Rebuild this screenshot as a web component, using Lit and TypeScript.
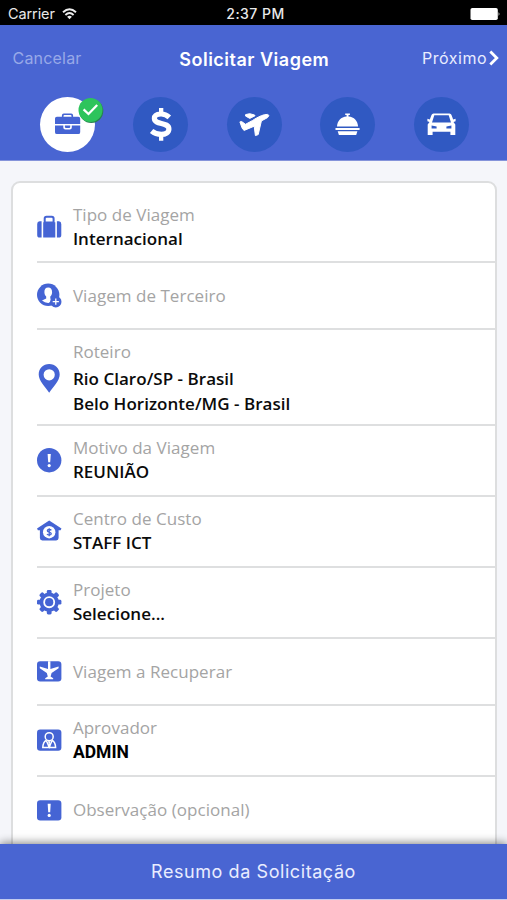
import { LitElement, html, svg, css, nothing } from "lit";
import { customElement, property } from "lit/decorators.js";

const BLUE = "#4564d4";

const rowIcons: Record<string, unknown> = {
  luggage: svg`<path d="M6.2 7.2V22.6H18.3V7.2H17.6V3.6Q17.6 .8 14.8 .8H9.5Q6.7 .8 6.7 3.6V7.2ZM8.7 6.4V3.8Q8.7 2.7 9.8 2.7H14.5Q15.6 2.7 15.6 3.8V6.4Z" fill-rule="evenodd"/><path d="M4.6 6.2V22.6H2.6Q.2 22.6 .2 20V9Q.2 6.4 2.6 6.2ZM19.9 6.2H21.9Q24.3 6.4 24.3 9V20Q24.3 22.6 21.9 22.6H19.9Z"/>`,
  guest: svg`<circle cx="11.2" cy="11.8" r="11.2"/><path d="M11.2 4.6C8.5 4.6 7.3 6.6 7.4 9.2 7.5 11.4 8.3 12.6 9.2 13.6V15.6L5 17.6Q8 20.2 11.6 20L15.2 17.3 13.3 15.6V13.6C14.4 12.4 15.1 11.2 15.1 9.2 15.1 6.6 13.9 4.6 11.2 4.6Z" fill="#fff"/><circle cx="18.8" cy="18.7" r="5.7"/><path d="M18.8 15.6V21.8M15.7 18.7H21.9" stroke="#fff" stroke-width="1.3"/>`,
  pin: svg`<path fill-rule="evenodd" d="M12.2-2C6.2-2 1.7 2.4 1.7 8.4 1.7 14.8 8.2 20.6 12.2 26.8 16.2 20.6 22.7 14.8 22.7 8.4 22.7 2.4 18.2-2 12.2-2ZM12.2 3.2A5.6 5.6 0 1 1 12.2 14.4 5.6 5.6 0 1 1 12.2 3.2Z"/>`,
  alert: svg`<circle cx="12.2" cy="12.2" r="12.2"/><path d="M10.6 5.9H13.8L13.2 14.2H11.2Z" fill="#fff"/><circle cx="12.2" cy="17.6" r="1.6" fill="#fff"/>`,
  house: svg`<path d="M12.2 1.6 24.5 9.6 23.6 11.2H21.6V19Q21.6 21.4 19.2 21.4H5.3Q2.9 21.4 2.9 19V11.2H.9L0 9.6Z"/><circle cx="12.2" cy="13.2" r="6.2" fill="#fff"/><path d="M14.3 11.4C13.6 10.2 10.4 10.1 10.3 11.8 10.3 13.6 14.3 12.8 14.3 14.8 14.2 16.4 10.8 16.3 10 15M12.2 9.3V17.2" fill="none" stroke="${BLUE}" stroke-width="1.3"/>`,
  gear: svg`<circle cx="12.2" cy="12.2" r="7.4" fill="none" stroke="${BLUE}" stroke-width="4.4"/>${[0, 45, 90, 135, 180, 225, 270, 315].map(
    (a) => svg`<path transform="rotate(${a} 12.2 12.2)" d="M9.8 4V1.4Q9.8 0 11.2 0H13.2Q14.6 0 14.6 1.4V4Z"/>`
  )}<circle cx="12.2" cy="12.2" r="5" fill="none" stroke="#fff" stroke-width="1.9"/><circle cx="12.2" cy="12.2" r="4.1"/>`,
  recover: svg`<rect x="0" y="2.2" width="24.4" height="20.2" rx="3.2"/><path d="M11 2.2H13.4V10L21.6 7.4V9.2L14.6 14 13.6 17.6 16.2 19.3V20.3H8.2V19.3L10.8 17.6 9.8 14 2.8 9.2V7.4L11 10Z" fill="#fff"/>`,
  approver: svg`<rect x="0" y="1.6" width="24.4" height="21.2" rx="3.2"/><g fill="none" stroke="#fff" stroke-width="1.5"><circle cx="12.2" cy="8.7" r="4"/><path d="M9.5 12.2C7 13.6 5.9 16 5.8 19.6H18.6C18.5 16 17.4 13.6 14.9 12.2M9.4 12.8 12.2 19.2 15 12.8"/></g><path d="M10.9 13.2H13.5L12.8 15.2 13.4 18.8H11L11.6 15.2Z" fill="#fff"/>`,
  note: svg`<rect x="0" y="2.2" width="24.4" height="20.2" rx="3.2"/><path d="M10.7 5.8H13.7L13.2 14.2H11.2Z" fill="#fff"/><circle cx="12.2" cy="17.4" r="1.6" fill="#fff"/>`,
};

const stepIcons: Record<string, unknown> = {
  briefcase: svg`<g fill="${BLUE}"><path fill-rule="evenodd" d="M16.5 19.7H21.9V18.4Q21.9 16.5 23.8 16.5H31.2Q33.1 16.5 33.1 18.4V19.7H38.3Q40.2 19.7 40.2 21.6V27H15V21.6Q15 19.7 16.9 19.7ZM23.5 19.7H31.5V19Q31.5 18 30.5 18H24.5Q23.5 18 23.5 19Z"/><path d="M15 28.4H23.3V30.6Q23.3 32.6 25.3 32.6H29.8Q31.8 32.6 31.8 30.6V28.4H40.2V35.2Q40.2 37.1 38.3 37.1H16.9Q15 37.1 15 35.2Z"/><path d="M24.9 28.4H30.2V29.9Q30.2 31 29.1 31H26Q24.9 31 24.9 29.9Z"/></g>`,
  dollar: svg`<path d="M36.3 20.3C33.8 18 30.6 16.9 27.8 17 23.6 17.1 21.4 18.8 21.4 21.5 21.4 28.3 35.9 24.5 35.9 32 35.9 35.4 32.5 37.4 28.3 37.4 24.4 37.4 21.2 36.3 18.6 34.1" fill="none" stroke="#fff" stroke-width="5.2"/><path d="M26 11H30.3V17H26ZM26 37H30.3V43.8H26Z" fill="#fff"/>`,
  plane: svg`<path fill="#fff" stroke="#fff" stroke-width="1" stroke-linejoin="round" d="M12.9 24.9 14.6 24.5 18.5 27.3 25.7 23.4 27.8 22C32.4 19.4 36.5 17.3 40.4 17.4 42.6 17.8 41.8 19.8 40.2 20.8L34.4 23.9 31.2 37.6 28.4 38.6 27.2 29.2 17.2 33.4Q15.6 32.4 15 30.8ZM18.6 17.6 22.7 16.7 27.6 18 28 18.8 22.8 21.4 18.5 19Z"/>`,
  bell: svg`<g fill="#fff"><path d="M17 29.4C17.4 23.8 21 20 26.6 19.5V18.1H25.2V16.6H29.9V18.1H28.5V19.5C34.1 20 37.7 23.8 38.1 29.4ZM15.5 30.9H39.6V33.1H15.5ZM17.7 34.2H37.4L36.2 37.9H18.9Z"/></g>`,
  car: svg`<path fill="#fff" fill-rule="evenodd" d="M19.5 16.5H35.5Q37 16.5 37.5 18L39.2 22.6 41.6 21.8V24.3L39.5 25 41.3 27.5V38H36.4V34.8H18.6V38H13.7V27.5L15.5 25 13.4 24.3V21.8L15.8 22.6 17.5 18Q18 16.5 19.5 16.5ZM20.3 18.3 18 25.4H37L34.7 18.3ZM17.6 28.5V31.6H22.6V29.4ZM37.4 28.5V31.6H32.4V29.4Z"/>`,
};

@customElement("step-button")
class StepButton extends LitElement {
  @property() icon = "";
  @property({ type: Boolean }) done = false;

  static styles = css`
    :host { display: block; width: 55px; height: 55px; position: relative; }
    .disc { width: 55px; height: 55px; border-radius: 50%; background: #3059c2; }
    .disc.active { background: #fff; }
    .glyph { display: block; width: 55px; height: 55px; }
    .badge { position: absolute; left: 38.5px; top: 0.5px; width: 26px; height: 26px; overflow: visible; }
  `;

  render() {
    return html`
      <div class="disc ${this.done ? "active" : ""}">
        <svg class="glyph" viewBox="0 0 55 55">${stepIcons[this.icon]}</svg>
      </div>
      ${this.done
        ? html`<svg class="badge" viewBox="0 0 26 26">
            <circle cx="13.3" cy="13" r="12" fill="#28814f" />
            <circle cx="12.5" cy="12" r="12" fill="#2dc45c" />
            <path d="M5.6 11.4 10.5 16 19.2 7" fill="none" stroke="#fff" stroke-width="2.3" />
          </svg>`
        : nothing}
    `;
  }
}

@customElement("form-row")
class FormRow extends LitElement {
  @property() icon = "";
  @property() label = "";
  @property({ attribute: false }) values: string[] = [];

  static styles = css`
    :host { display: flex; align-items: center; box-sizing: border-box; border-bottom: 2px solid #dedfe0; }
    .icon { width: 24.4px; height: 24.4px; margin-right: 12px; overflow: visible; flex: none; }
    .label { font: 400 17px/24px "Open Sans", sans-serif; color: #a4a4a4; white-space: nowrap; letter-spacing: 0.04px; }
    .value { font: 600 17px/24.5px "Open Sans", sans-serif; color: #0b0b0b; white-space: nowrap; letter-spacing: 0.03px; }
    .system { font: 700 17.5px/24.5px Roboto, sans-serif; color: #000; }
    .several { margin-bottom: 3px; }
  `;

  render() {
    return html`
      <svg class="icon" viewBox="0 0 24.4 24.4" fill=${BLUE}>${rowIcons[this.icon]}</svg>
      <div>
        <div class="label ${this.values.length > 1 ? "several" : ""}">${this.label}</div>
        ${this.values.map((v) => html`<div class="value ${v === "ADMIN" ? "system" : ""}">${v}</div>`)}
      </div>
    `;
  }
}

@customElement("app-root")
class AppRoot extends LitElement {
  static styles = css`
    :host { display: flex; flex-direction: column; width: 507px; height: 900px; overflow: hidden; background: #f5f6fa; }
    .status { flex: none; height: 25px; background: #000; color: #e9e9e9; display: grid; grid-template-columns: 1fr auto 1fr; align-items: center; padding: 2px 6px 0 8px; box-sizing: border-box; font: 400 14.5px/20px Inter, sans-serif; }
    .carrier { display: flex; align-items: center; gap: 7px; letter-spacing: -0.1px; }
    .time { font-weight: 500; font-size: 14px; letter-spacing: 0.45px; padding-left: 2px; }
    .battery { justify-self: end; display: block; }
    .header { flex: none; height: 135.5px; background: #4965d2; color: #fff; font-family: Inter, sans-serif; border-bottom: 1px solid #8594da; box-sizing: border-box; }
    .nav { display: grid; grid-template-columns: 1fr auto 1fr; align-items: center; height: 66px; padding: 0 8px 0 12.5px; }
    .cancel { font-size: 16px; color: #98a9e8; letter-spacing: 0.2px; }
    .title { font-size: 18px; font-weight: 600; letter-spacing: 0.5px; padding: 2px 3px 0 0; }
    .next { justify-self: end; display: flex; align-items: center; gap: 2px; font-size: 16px; letter-spacing: 0.5px; color: #e9edff; }
    .steps { display: flex; justify-content: space-between; padding: 6px 38.5px 0 39.5px; }
    .content { flex: 1; min-height: 0; padding: 20px 10px 0 11px; overflow: hidden; }
    .card { height: 720px; background: #fff; border: 2px solid #dddedf; border-radius: 9px; box-sizing: border-box; padding-left: 23.5px; }
    .lead { height: 80px; padding-top: 12px; }
    .single { height: 67px; padding-top: 1px; }
    .double { height: 71px; }
    .triple { height: 96px; padding-top: 3px; }
    .last { border-bottom: none; padding-bottom: 1px; }
    .footer { flex: none; position: relative; height: 56.5px; box-sizing: border-box; background: #4965d2; border-bottom: 1.5px solid #c3cbef; box-shadow: 0 -1px 9px rgba(0, 0, 0, 0.5); display: flex; align-items: center; justify-content: center; color: #e9edff; font: 400 18px/24px Inter, sans-serif; letter-spacing: 0.57px; padding-top: 2px; }
  `;

  render() {
    return html`
      <div class="status">
        <div class="carrier">
          <span class="carriername">Carrier</span>
          <svg width="15" height="12" viewBox="0 0 15 12" fill="none" stroke="#eee" stroke-width="1.9">
            <path d="M1 4.2Q7.5-1.8 14 4.2M3.4 7Q7.5 3.2 11.6 7" />
            <path d="M7.5 11.2 5.1 8.7Q7.5 6.8 9.9 8.7Z" fill="#eee" stroke="none" />
          </svg>
        </div>
        <div class="time">2:37 PM</div>
        <svg class="battery" width="31" height="12" viewBox="0 0 31 12" fill="#fff">
          <rect x=".5" width="27.3" height="12" rx="1.8" /><path d="M28.6 4Q30.4 6 28.6 8Z" />
        </svg>
      </div>
      <div class="header">
        <div class="nav">
          <span class="cancel">Cancelar</span>
          <span class="title">Solicitar Viagem</span>
          <span class="next"><span class="nexttext">Próximo</span>
            <svg width="10" height="16" viewBox="0 0 10 16" fill="none" stroke="#fff" stroke-width="2.8"><path d="M1.3 1.5 7.8 8 1.3 14.5" /></svg>
          </span>
        </div>
        <div class="steps">
          <step-button icon="briefcase" done></step-button>
          <step-button icon="dollar"></step-button>
          <step-button icon="plane"></step-button>
          <step-button icon="bell"></step-button>
          <step-button icon="car"></step-button>
        </div>
      </div>
      <div class="content">
        <div class="card">
          <form-row class="lead" icon="luggage" label="Tipo de Viagem" .values=${["Internacional"]}></form-row>
          <form-row class="single" icon="guest" label="Viagem de Terceiro"></form-row>
          <form-row class="triple" icon="pin" label="Roteiro" .values=${["Rio Claro/SP - Brasil", "Belo Horizonte/MG - Brasil"]}></form-row>
          <form-row class="double" icon="alert" label="Motivo da Viagem" .values=${["REUNIÃO"]}></form-row>
          <form-row class="double" icon="house" label="Centro de Custo" .values=${["STAFF ICT"]}></form-row>
          <form-row class="double" icon="gear" label="Projeto" .values=${["Selecione..."]}></form-row>
          <form-row class="single" icon="recover" label="Viagem a Recuperar"></form-row>
          <form-row class="double" icon="approver" label="Aprovador" .values=${["ADMIN"]}></form-row>
          <form-row class="single last" icon="note" label="Observação (opcional)"></form-row>
        </div>
      </div>
      <div class="footer"><span>Resumo da Solicitação</span></div>
    `;
  }
}
